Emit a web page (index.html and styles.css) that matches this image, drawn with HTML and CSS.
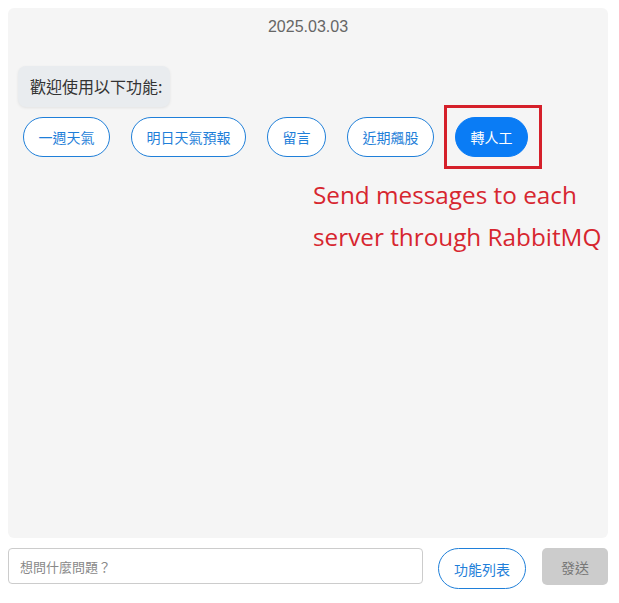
FILE: index.html
```html
<!DOCTYPE html>
<html lang="zh-Hant">
<head>
<meta charset="utf-8">
<title>Chat</title>
<link rel="stylesheet" href="styles.css">
</head>
<body>
<div class="chat">
  <div class="date">2025.03.03</div>
  <div class="bubble">歡迎使用以下功能:</div>
  <div class="options">
    <button class="opt">一週天氣</button>
    <button class="opt">明日天氣預報</button>
    <button class="opt">留言</button>
    <button class="opt">近期飆股</button>
    <button class="opt opt-active">轉人工</button>
  </div>
  <div class="highlight"></div>
  <div class="note">Send messages to each<br>server through RabbitMQ</div>
</div>
<div class="composer">
  <input class="ask" type="text" placeholder="想問什麼問題？">
  <button class="menu-btn">功能列表</button>
  <button class="send-btn">發送</button>
</div>
</body>
</html>
```
FILE: styles.css
```css
html, body {
  margin: 0;
  padding: 0;
  background: #ffffff;
}
body {
  padding: 8px;
  font-family: "Liberation Sans", "Noto Sans CJK TC", sans-serif;
}
.chat {
  position: relative;
  box-sizing: border-box;
  width: 600px;
  height: 530px;
  background: #f5f5f5;
  border-radius: 6px;
  padding: 9px 10px;
}
.date {
  text-align: center;
  color: #666;
  font-size: 16px;
  line-height: 20px;
  font-family: "Liberation Sans", Arial, sans-serif;
}
.bubble {
  display: inline-block;
  margin-top: 29px;
  background: #e9ecef;
  border-radius: 8px;
  padding: 10px 8px 10px 12px;
  font-size: 16px;
  line-height: 21px;
  color: #333;
  font-family: "Noto Sans CJK TC", sans-serif;
  box-shadow: 0 1px 3px rgba(0, 0, 0, 0.08);
}
.options {
  display: flex;
  gap: 21px;
  margin-top: 10px;
  padding-left: 5px;
}
.opt {
  font-family: "Noto Sans CJK TC", sans-serif;
  font-size: 14px;
  line-height: 20px;
  padding: 9px 14.5px;
  border: 1px solid #1f7fd9;
  border-radius: 20px;
  background: #fff;
  color: #1f7fd9;
  cursor: pointer;
}
.opt-active {
  background: #0a7cf5;
  border-color: #0a7cf5;
  color: #fff;
}
.highlight {
  position: absolute;
  left: 436px;
  top: 97px;
  width: 92px;
  height: 58px;
  border: 3px solid #d5202a;
}
.note {
  position: absolute;
  left: 305px;
  top: 166px;
  font-family: "Open Sans", sans-serif;
  font-size: 24.3px;
  line-height: 42px;
  color: #d7262f;
  white-space: nowrap;
}
.composer {
  display: flex;
  align-items: flex-start;
  margin-top: 10px;
  width: 600px;
}
.ask {
  box-sizing: border-box;
  width: 415px;
  height: 36px;
  border: 1px solid #ccc;
  border-radius: 4px;
  padding: 0 11px;
  font-family: "Noto Sans CJK TC", sans-serif;
  font-size: 13px;
  color: #333;
  background: #fff;
}
.ask::placeholder {
  color: #888;
}
.menu-btn {
  box-sizing: border-box;
  margin-left: 15px;
  width: 88px;
  height: 41px;
  border: 1px solid #1f7fd9;
  border-radius: 21px;
  background: #fff;
  color: #1f7fd9;
  font-family: "Noto Sans CJK TC", sans-serif;
  font-size: 14px;
  padding: 0;
}
.send-btn {
  box-sizing: border-box;
  margin-left: 16px;
  width: 66px;
  height: 37px;
  border: none;
  border-radius: 5px;
  background: #cccccc;
  color: #777;
  font-family: "Noto Sans CJK TC", sans-serif;
  font-size: 14px;
  padding: 0;
}
```
